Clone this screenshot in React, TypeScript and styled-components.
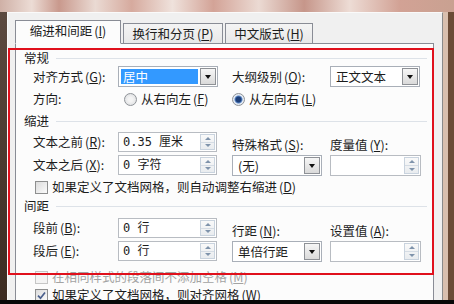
import React from 'react'
import styled, { createGlobalStyle } from 'styled-components'

const GlobalStyle = createGlobalStyle`
  html, body { margin: 0; padding: 0; background: #000; }
  body { font-family: "Noto Sans CJK SC", "Noto Sans", sans-serif; }
`

const Acc = ({ k }: { k: string }) => (
  <AccKey>(<u>{k}</u>)</AccKey>
)

const Check = () => (
  <svg width="9" height="9" viewBox="0 0 9 9">
    <path d="M1 4.6 L3.5 7.2 L8 1.4" stroke="#4a5f8c" strokeWidth="1.7" fill="none" />
  </svg>
)

export default function App() {
  return (
    <>
      <GlobalStyle />
      <Page>
        <Dialog>
          <Tabs>
            <Tab $active $w={106}>缩进和间距<Acc k="I" /></Tab>
            <Tab $w={100}>换行和分页<Acc k="P" /></Tab>
            <Tab $w={88}>中文版式<Acc k="H" /></Tab>
          </Tabs>
          <Panel>
            <GroupHeader>常规</GroupHeader>
            <Group>
              <Row>
                <Label $w={85}>对齐方式<Acc k="G" />:</Label>
                <Select $w={100}>
                  <SelectText $selected>居中</SelectText>
                  <DropButton />
                </Select>
                <Label $w={98} $ml={14}>大纲级别<Acc k="O" />:</Label>
                <Select $w={90}>
                  <SelectText>正文文本</SelectText>
                  <DropButton />
                </Select>
              </Row>
              <Row $mt={4}>
                <Label $w={85}>方向:</Label>
                <Option $w={114} $pl={6}><Radio />从右向左<Acc k="F" /></Option>
                <Option><Radio $on />从左向右<Acc k="L" /></Option>
              </Row>
            </Group>

            <GroupHeader $mt={6}>缩进</GroupHeader>
            <Group $mt={3}>
              <FieldBlock>
                <FieldColumn>
                  <Row>
                    <Label $w={85}>文本之前<Acc k="R" />:</Label>
                    <SpinBox $w={99}><SpinText>0.35 厘米</SpinText><Spinner><SpinHalf $up /><SpinHalf /></Spinner></SpinBox>
                  </Row>
                  <Row>
                    <Label $w={85}>文本之后<Acc k="X" />:</Label>
                    <SpinBox $w={99}><SpinText>0 字符</SpinText><Spinner><SpinHalf $up /><SpinHalf /></Spinner></SpinBox>
                  </Row>
                </FieldColumn>
                <SideField>
                  <Label>特殊格式<Acc k="S" />:</Label>
                  <Select $w={90}><SelectText>(无)</SelectText><DropButton /></Select>
                </SideField>
                <SideField $ml={8}>
                  <Label>度量值<Acc k="Y" />:</Label>
                  <SpinBox $w={91} $h={21}><SpinText /><Spinner><SpinHalf $up /><SpinHalf /></Spinner></SpinBox>
                </SideField>
              </FieldBlock>
              <CheckRow $mt={3}>
                <CheckBox />如果定义了文档网格，则自动调整右缩进<Acc k="D" />
              </CheckRow>
            </Group>

            <GroupHeader $mt={3}>间距</GroupHeader>
            <Group $mt={4}>
              <FieldBlock>
                <FieldColumn>
                  <Row>
                    <Label $w={85}>段前<Acc k="B" />:</Label>
                    <SpinBox $w={99}><SpinText>0 行</SpinText><Spinner><SpinHalf $up /><SpinHalf /></Spinner></SpinBox>
                  </Row>
                  <Row>
                    <Label $w={85}>段后<Acc k="E" />:</Label>
                    <SpinBox $w={99}><SpinText>0 行</SpinText><Spinner><SpinHalf $up /><SpinHalf /></Spinner></SpinBox>
                  </Row>
                </FieldColumn>
                <SideField>
                  <Label>行距<Acc k="N" />:</Label>
                  <Select $w={90}><SelectText>单倍行距</SelectText><DropButton /></Select>
                </SideField>
                <SideField $ml={8}>
                  <Label>设置值<Acc k="A" />:</Label>
                  <SpinBox $w={91} $h={21}><SpinText /><Spinner><SpinHalf $up /><SpinHalf /></Spinner></SpinBox>
                </SideField>
              </FieldBlock>
              <CheckRow $mt={7} $disabled>
                <CheckBox $disabled />在相同样式的段落间不添加空格<Acc k="M" />
              </CheckRow>
              <CheckRow $mt={2}>
                <CheckBox><Check /></CheckBox>如果定义了文档网格，则对齐网格<Acc k="W" />
              </CheckRow>
            </Group>
          </Panel>
        </Dialog>
        <Highlight />
      </Page>
    </>
  )
}

const Page = styled.div`
  position: relative;
  width: 454px;
  height: 304px;
  box-sizing: border-box;
  padding: 12px 11px 4px 7px;
  overflow: hidden;
  display: flex;
  background:
    linear-gradient(#080808, #080808) left bottom / 100% 4px no-repeat,
    linear-gradient(90deg, #d9bfae 0 5px, #6b4b36 5px) right 0 top 12px / 11px 100% no-repeat,
    linear-gradient(#5c4a40, #3a2a20) left 0 top 12px / 7px 100% no-repeat,
    linear-gradient(90deg, #cfb0a6 0%, #ecdcd5 7%, #c9998d 13%, #eadad3 21%, #d6aa9e 29%,
      #efe2dc 38%, #d3a397 47%, #ebdad3 57%, #c6968a 67%, #eddcd5 77%, #d2a295 88%, #c9a191 100%);
`

const Dialog = styled.div`
  flex: 1;
  display: flex;
  flex-direction: column;
  background: #f0f0f0;
  border-top: 1px solid #fafafa;
  border-left: 1px solid #fafafa;
  border-right: 1px solid #8a8a8a;
  padding: 7px 8px 0 7px;
  overflow: hidden;
  color: #1c1c1c;
  font-size: 12.5px;
  line-height: 16px;
`

const Tabs = styled.div`
  display: flex;
  align-items: flex-end;
  gap: 2px;
  height: 24px;
  margin-bottom: -1px;
  position: relative;
  z-index: 1;
`

const Tab = styled.div<{ $active?: boolean; $w: number }>`
  width: ${p => p.$w}px;
  height: ${p => (p.$active ? 24 : 21)}px;
  box-sizing: border-box;
  border: 1px solid #898c95;
  border-bottom-color: ${p => (p.$active ? '#fcfcfc' : '#898c95')};
  background: ${p => (p.$active ? '#fcfcfc' : 'linear-gradient(#f4f4f4, #e8e8e8)')};
  display: flex;
  align-items: center;
  justify-content: center;
  padding-bottom: ${p => (p.$active ? 2 : 0)}px;
  white-space: nowrap;
`

const Panel = styled.div`
  flex: 1;
  background: #fcfcfc;
  border: 1px solid #898c95;
  border-bottom: none;
  padding: 6px 6px 0 8px;
`

const GroupHeader = styled.div<{ $mt?: number }>`
  display: flex;
  align-items: center;
  gap: 7px;
  height: 16px;
  margin-top: ${p => p.$mt ?? 0}px;
  &::after {
    content: '';
    flex: 1;
    height: 1px;
    background: #dde2e8;
  }
`

const Group = styled.div<{ $mt?: number }>`
  display: flex;
  flex-direction: column;
  padding-left: 9px;
  margin-top: ${p => p.$mt ?? 0}px;
`

const Row = styled.div<{ $mt?: number }>`
  display: flex;
  align-items: center;
  margin-top: ${p => p.$mt ?? 0}px;
  white-space: nowrap;
`

const Label = styled.span<{ $w?: number; $ml?: number }>`
  ${p => (p.$w ? `width: ${p.$w}px;` : '')}
  margin-left: ${p => p.$ml ?? 0}px;
  flex-shrink: 0;
  height: 16px;
  white-space: nowrap;
`

const AccKey = styled.span`
  margin-left: 2px;
  u { text-decoration-thickness: 1px; text-underline-offset: 1px; }
`

const Select = styled.div<{ $w: number }>`
  width: ${p => p.$w}px;
  height: 21px;
  box-sizing: border-box;
  border: 1px solid #a9afb8;
  background: #fff;
  padding: 1px;
  display: flex;
  flex-shrink: 0;
`

const SelectText = styled.span<{ $selected?: boolean }>`
  flex: 1;
  display: flex;
  align-items: center;
  margin: ${p => (p.$selected ? '1px 2px 1px 1px' : '0')};
  padding-left: ${p => (p.$selected ? 2 : 4)}px;
  background: ${p => (p.$selected ? '#3399ff' : 'transparent')};
  color: ${p => (p.$selected ? '#fff' : 'inherit')};
`

const DropButton = styled.span`
  width: 16px;
  box-sizing: border-box;
  border: 1px solid #8e9196;
  background: linear-gradient(#f6f6f6, #dadada);
  display: flex;
  align-items: center;
  justify-content: center;
  &::after {
    content: '';
    border-left: 3.5px solid transparent;
    border-right: 3.5px solid transparent;
    border-top: 4px solid #111;
  }
`

const SpinBox = styled.div<{ $w: number; $h?: number }>`
  width: ${p => p.$w}px;
  height: ${p => p.$h ?? 20}px;
  box-sizing: border-box;
  border: 1px solid #b8bcc2;
  background: #fff;
  padding: 1px;
  display: flex;
  flex-shrink: 0;
`

const SpinText = styled.span`
  flex: 1;
  display: flex;
  align-items: center;
  padding-left: 3px;
  font-family: "DejaVu Sans Mono", "Noto Sans CJK SC", monospace;
  font-size: 12px;
  white-space: pre;
`

const Spinner = styled.span`
  width: 15px;
  box-sizing: border-box;
  border: 1px solid #c9d3de;
  background: linear-gradient(#f9f9f9, #e9ecef);
  display: flex;
  flex-direction: column;
`

const SpinHalf = styled.span<{ $up?: boolean }>`
  flex: 1;
  display: flex;
  align-items: center;
  justify-content: center;
  border-top: ${p => (p.$up ? 'none' : '1px solid #d5dce4')};
  &::after {
    content: '';
    border-left: 3px solid transparent;
    border-right: 3px solid transparent;
    ${p => (p.$up ? 'border-bottom: 3px solid #7f93ab;' : 'border-top: 3px solid #7f93ab;')}
  }
`

const FieldBlock = styled.div`
  display: flex;
  align-items: flex-start;
`

const FieldColumn = styled.div`
  width: 199px;
  display: flex;
  flex-direction: column;
  gap: 3px;
`

const SideField = styled.div<{ $ml?: number }>`
  display: flex;
  flex-direction: column;
  gap: 2px;
  margin-top: 5px;
  margin-left: ${p => p.$ml ?? 0}px;
  white-space: nowrap;
`

const Option = styled.span<{ $w?: number; $pl?: number }>`
  display: flex;
  align-items: center;
  ${p => (p.$w ? `width: ${p.$w}px;` : '')}
  padding-left: ${p => p.$pl ?? 0}px;
  box-sizing: border-box;
`

const Radio = styled.span<{ $on?: boolean }>`
  width: 13px;
  height: 13px;
  box-sizing: border-box;
  border-radius: 50%;
  border: 1px solid #8f9398;
  margin-right: 4px;
  background: ${p =>
    p.$on
      ? 'radial-gradient(circle, #1d3f78 0 2.5px, #5b86c4 3.5px, #e8eef6 4.5px, #d4d8dd 100%)'
      : 'radial-gradient(circle, #f4f4f4 0 2px, #d7d9dc 100%)'};
`

const CheckRow = styled.div<{ $mt?: number; $disabled?: boolean }>`
  display: flex;
  align-items: center;
  height: 16px;
  padding-left: 2px;
  margin-top: ${p => p.$mt ?? 0}px;
  white-space: nowrap;
  color: ${p => (p.$disabled ? '#a3a3a3' : 'inherit')};
`

const CheckBox = styled.span<{ $disabled?: boolean }>`
  width: 13px;
  height: 13px;
  box-sizing: border-box;
  border: 1px solid ${p => (p.$disabled ? '#c6c6c6' : '#8e8f8f')};
  background: ${p => (p.$disabled ? '#f4f4f4' : 'linear-gradient(135deg, #dcdcdc, #fbfbfb)')};
  margin-right: 4px;
  display: flex;
  align-items: center;
  justify-content: center;
`

const Highlight = styled.div`
  position: absolute;
  left: 8px;
  top: 48px;
  width: 426px;
  height: 227px;
  box-sizing: border-box;
  border: 2px solid #e0101c;
  pointer-events: none;
`
